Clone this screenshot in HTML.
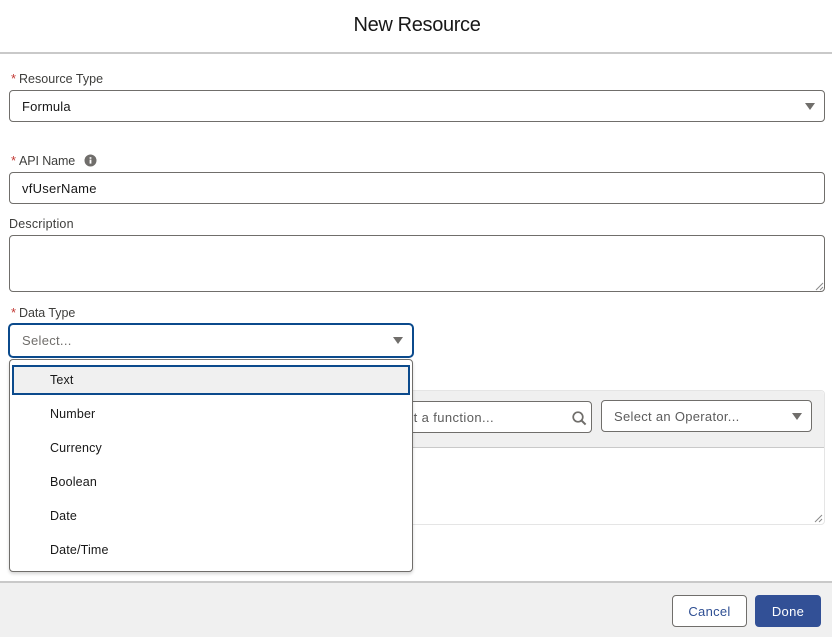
<!DOCTYPE html>
<html><head><meta charset="utf-8">
<style>
*{box-sizing:border-box}
html,body{margin:0;padding:0;width:832px;height:637px;overflow:hidden;background:#fff;font-family:"Liberation Sans",sans-serif;color:#181818}
.a{position:absolute}
.t{position:absolute;font-size:13px;line-height:16px;white-space:nowrap;letter-spacing:.15px}
.l{color:#3e3e3c;font-size:12.5px;letter-spacing:0}
.s{color:#c23934}
.box{position:absolute;background:#fff;border:1px solid #706e6b;border-radius:4px}
svg{position:absolute;display:block}
</style></head><body>
<div class="a" style="left:0;top:0;width:832px;height:54px;border-bottom:2px solid #c9c9c9"></div>
<div class="t" style="left:0;width:834px;text-align:center;top:13px;font-size:20px;line-height:24px;letter-spacing:-.35px;color:#181818">New Resource</div>

<div class="t s" style="left:11px;top:71px">*</div>
<div class="t l" style="left:19px;top:71px;letter-spacing:.02px">Resource Type</div>
<div class="box" style="left:9px;top:90px;width:816px;height:32px"></div>
<div class="t" style="left:22px;top:99px">Formula</div>
<svg style="left:804px;top:102px" width="12" height="9"><path d="M1 1h10L6 8z" fill="#706e6b"/></svg>

<div class="t s" style="left:11px;top:153px">*</div>
<div class="t l" style="left:19px;top:153px;letter-spacing:-.1px">API Name</div>
<svg style="left:84px;top:154px" width="13" height="13" viewBox="0 0 13 13"><circle cx="6.5" cy="6.5" r="6" fill="#706e6b"/><rect x="5.6" y="5.6" width="1.8" height="4" fill="#fff"/><rect x="5.6" y="3.2" width="1.8" height="1.6" fill="#fff"/></svg>
<div class="box" style="left:9px;top:172px;width:816px;height:32px"></div>
<div class="t" style="left:22px;top:181px;letter-spacing:.25px">vfUserName</div>

<div class="t l" style="left:9px;top:216px;letter-spacing:.2px">Description</div>
<div class="box" style="left:9px;top:235px;width:816px;height:57px"></div>
<svg style="left:815px;top:282px" width="9" height="9"><path d="M1 8L8 1M5 8L8 5" stroke="#8a8a8a" stroke-width="1" fill="none"/></svg>

<div class="t s" style="left:11px;top:305px">*</div>
<div class="t l" style="left:19px;top:305px;letter-spacing:-.05px">Data Type</div>

<!-- formula panel -->
<div class="a" style="left:300px;top:390px;width:525px;height:135px;background:#fff;border:1px solid #e5e5e5;border-radius:4px"></div>
<div class="a" style="left:300px;top:391px;width:524px;height:57px;background:#f0f0f0;border-bottom:1px solid #c9c9c9;border-radius:4px 4px 0 0"></div>
<div class="box" style="left:300px;top:401px;width:292px;height:32px"></div>
<div class="t" style="left:350px;top:410px;width:144px;text-align:right;color:#5c5c5c;letter-spacing:.4px">Select a function...</div>
<svg style="left:571px;top:410px" width="16" height="16" viewBox="0 0 16 16"><circle cx="7" cy="7" r="4.8" fill="none" stroke="#706e6b" stroke-width="1.7"/><path d="M10.5 10.5L14.6 14.6" stroke="#706e6b" stroke-width="2" fill="none"/></svg>
<div class="box" style="left:601px;top:400px;width:211px;height:32px"></div>
<div class="t" style="left:614px;top:409px;color:#5c5c5c;letter-spacing:.3px">Select an Operator...</div>
<svg style="left:791px;top:412px" width="12" height="9"><path d="M1 1h10L6 8z" fill="#706e6b"/></svg>
<svg style="left:814px;top:514px" width="9" height="9"><path d="M1 8L8 1M5 8L8 5" stroke="#8a8a8a" stroke-width="1" fill="none"/></svg>

<!-- focused select -->
<div class="a" style="left:8px;top:323px;width:406px;height:35px;background:#fff;border:2px solid #0b4a8c;border-radius:5px"></div>
<div class="t" style="left:22px;top:333px;color:#706e6b;letter-spacing:.3px">Select...</div>
<svg style="left:392px;top:336px" width="12" height="9"><path d="M1 1h10L6 8z" fill="#706e6b"/></svg>

<!-- dropdown -->
<div class="a" style="left:9px;top:359px;width:404px;height:213px;background:#fff;border:1px solid #706e6b;border-radius:4px;box-shadow:0 2px 3px rgba(0,0,0,.16)"></div>
<div class="a" style="left:12px;top:365px;width:398px;height:30px;background:#f0f0f0;border:2px solid #0b4a8c"></div>
<div class="t" style="left:50px;top:372px;font-size:12.5px">Text</div>
<div class="t" style="left:50px;top:406px;font-size:12.5px">Number</div>
<div class="t" style="left:50px;top:440px;font-size:12.5px">Currency</div>
<div class="t" style="left:50px;top:474px;font-size:12.5px">Boolean</div>
<div class="t" style="left:50px;top:508px;font-size:12.5px">Date</div>
<div class="t" style="left:50px;top:542px;font-size:12.5px">Date/Time</div>

<!-- footer -->
<div class="a" style="left:0;top:581px;width:832px;height:56px;background:#f0f0f0;border-top:2px solid #c9c9c9"></div>
<div class="box" style="left:672px;top:595px;width:75px;height:32px"></div>
<div class="t" style="left:672px;width:75px;text-align:center;top:604px;color:#2f4f93;letter-spacing:.3px">Cancel</div>
<div class="a" style="left:755px;top:595px;width:66px;height:32px;background:#325096;border-radius:4px"></div>
<div class="t" style="left:755px;width:66px;text-align:center;top:604px;color:#fff;letter-spacing:.3px">Done</div>
</body></html>
